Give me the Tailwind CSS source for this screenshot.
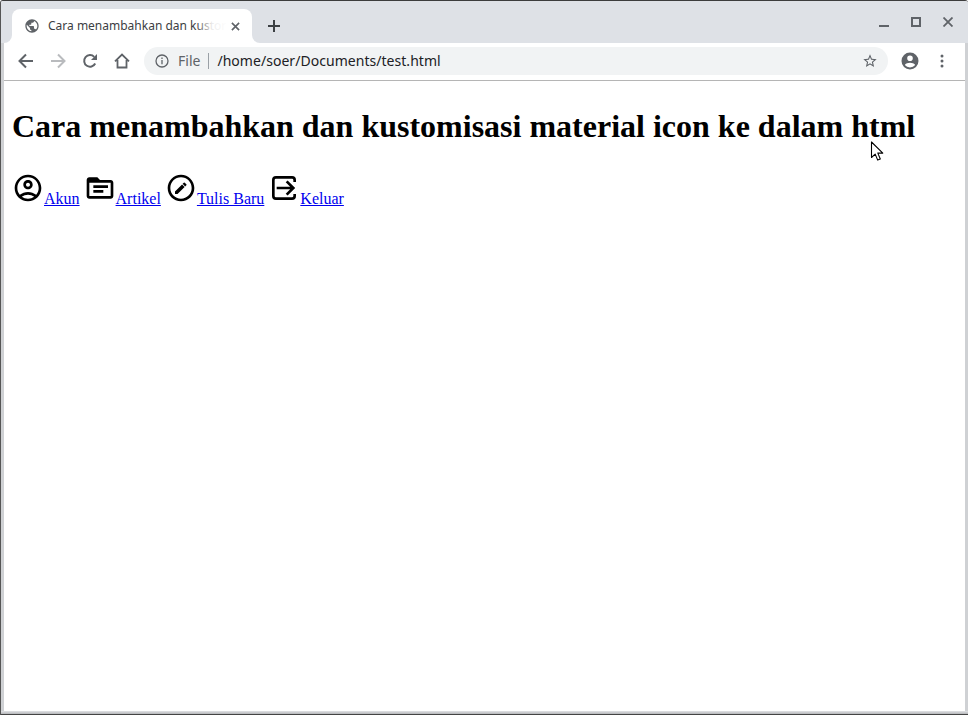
<!DOCTYPE html>
<html>
<head>
<meta charset="utf-8">
<title>Cara menambahkan dan kustomisasi material icon ke dalam html</title>
<script src="https://cdn.jsdelivr.net/npm/@tailwindcss/browser@4"></script>
</head>
<body class="bg-white overflow-hidden">
<div class="relative w-[968px] h-[715px] flex flex-col overflow-hidden bg-white border-t border-t-[#3c3c3c] border-l border-l-[#555] rounded-t-[3px]">
  <!-- tab strip -->
  <div class="h-[42px] shrink-0 bg-[#dee1e6] flex items-end pl-[11px] text-[#5f6368]">
    <div class="relative z-10 w-[240px] h-[34px] bg-white rounded-t-[8px] flex items-center pl-[12px] pr-[10px]">
      <svg class="w-[16px] h-[16px] shrink-0" viewBox="0 0 24 24" fill="#5f6368"><path d="M12 2C6.48 2 2 6.48 2 12s4.48 10 10 10 10-4.48 10-10S17.52 2 12 2zm-1 17.93c-3.95-.49-7-3.85-7-7.93 0-.62.08-1.21.21-1.79L9 15v1c0 1.1.9 2 2 2v1.93zm6.9-2.54c-.26-.81-1-1.39-1.9-1.39h-1v-3c0-.55-.45-1-1-1H8v-2h2c.55 0 1-.45 1-1V7h2c1.1 0 2-.9 2-2v-.41c2.93 1.19 5 4.06 5 7.41 0 2.08-.8 3.97-2.1 5.39z"/></svg>
      <div class="relative ml-[8px] w-[180px] shrink-0 whitespace-nowrap text-[12px] text-[#3c4043] font-['Noto_Sans',sans-serif]">Cara menambahkan dan kustor<div class="absolute inset-y-0 right-0 w-[32px] bg-gradient-to-r from-white/0 via-white/90 to-white"></div></div>
      <svg class="ml-[3px] w-[9px] h-[9px] shrink-0" viewBox="0 0 10 10" stroke="#5f6368" stroke-width="1.8" fill="none"><path d="M1 1l8 8M9 1l-8 8"/></svg>
      <div class="absolute -left-[8px] bottom-0 w-[8px] h-[8px] bg-white"><div class="w-full h-full bg-[#dee1e6] rounded-br-[8px]"></div></div>
      <div class="absolute -right-[8px] bottom-0 w-[8px] h-[8px] bg-white"><div class="w-full h-full bg-[#dee1e6] rounded-bl-[8px]"></div></div>
    </div>
    <svg class="ml-[15px] mb-[10px] w-[14px] h-[14px]" viewBox="0 0 14 14" stroke="#3c4043" stroke-width="2" fill="none"><path d="M7 1v12M1 7h12"/></svg>
    <div class="ml-auto self-start flex items-start h-[42px] pt-[16px] gap-[22px] pr-[15px]">
      <svg class="w-[10px] h-[10px]" viewBox="0 0 10 10" fill="#5f6368"><rect x="0" y="8" width="10" height="2"/></svg>
      <svg class="w-[10px] h-[10px]" viewBox="0 0 10 10" stroke="#5f6368" stroke-width="2" fill="none"><rect x="1" y="1" width="8" height="8"/></svg>
      <svg class="w-[10px] h-[10px]" viewBox="0 0 10 10" stroke="#5f6368" stroke-width="1.8" fill="none"><path d="M.5.5l9 9M9.5.5l-9 9"/></svg>
    </div>
  </div>
  <!-- toolbar -->
  <div class="h-[38px] shrink-0 bg-white border-b border-b-[#b5b5b5] flex items-center pl-[17px] pr-[14px] pb-[2px]">
    <svg class="w-[16px] h-[16px]" viewBox="0 0 16 16" fill="none" stroke="#5f6368" stroke-width="2"><path d="M15 8H2M8 1.500L1.500 8 8 14.500"/></svg>
    <svg class="ml-[16px] w-[16px] h-[16px]" viewBox="0 0 16 16" fill="none" stroke="#b9bbbe" stroke-width="2"><path d="M1 8h13M8 1.500L14.500 8 8 14.500"/></svg>
    <svg class="ml-[16px] w-[16px] h-[16px]" viewBox="0 0 16 16" fill="none"><path d="M13.200 10.500A5.800 5.800 0 1 1 12.200 3.900" stroke="#5f6368" stroke-width="2"/><path d="M15 1v6H9z" fill="#5f6368"/></svg>
    <svg class="ml-[16px] w-[16px] h-[16px]" viewBox="0 0 16 16" fill="none" stroke="#5f6368" stroke-width="1.800"><path d="M1 8.300L8 1.500l7 6.800M3.500 7v7.500h9V7"/></svg>
    <div class="ml-[14px] w-[744px] h-[28px] rounded-full bg-[#f1f3f4] flex items-center pl-[11px] pr-[10px] font-['Noto_Sans',sans-serif]">
      <svg class="w-[14px] h-[14px] shrink-0" viewBox="0 0 14 14" fill="none" stroke="#5f6368" stroke-width="1.300"><circle cx="7" cy="7" r="6"/><path d="M7 6v4.200M7 3.600v1.400"/></svg>
      <span class="ml-[9px] text-[14px] text-[#5f6368]">File</span>
      <span class="ml-[8px] w-px h-[16px] bg-[#9aa0a6]"></span>
      <span class="ml-[8px] text-[14px] tracking-[0.04px] text-[#202124]">/home/soer/Documents/test.html</span>
      <svg class="ml-auto w-[16px] h-[16px]" viewBox="0 0 24 24" fill="#5f6368"><path d="M22 9.240l-7.190-.62L12 2 9.190 8.630 2 9.240l5.460 4.730L5.820 21 12 17.270 18.180 21l-1.630-7.030L22 9.240zM12 15.400l-3.760 2.270 1-4.280-3.320-2.880 4.380-.38L12 6.100l1.710 4.040 4.380.38-3.320 2.880 1 4.280L12 15.400z"/></svg>
    </div>
    <svg class="ml-[12px] w-[20px] h-[20px]" viewBox="0 0 20 20" fill="#5f6368"><path d="M10 1.500a8.500 8.500 0 1 0 0 17 8.500 8.500 0 0 0 0-17zm0 3a2.800 2.800 0 1 1 0 5.600a2.800 2.800 0 0 1 0-5.600zm0 12a6.700 6.700 0 0 1-5.200-2.500c.6-1.500 3.500-2.300 5.200-2.300s4.600.8 5.200 2.300A6.700 6.700 0 0 1 10 16.500z"/></svg>
    <svg class="ml-[20px] w-[4px] h-[14px]" viewBox="0 0 4 14" fill="#5f6368"><circle cx="2" cy="2" r="1.500"/><circle cx="2" cy="7" r="1.500"/><circle cx="2" cy="12" r="1.500"/></svg>
  </div>
  <!-- page -->
  <div class="relative flex-1 px-[11px] font-['Liberation_Serif',serif] text-black">
    <h1 class="text-[32px] leading-[37px] font-bold pt-[27px] whitespace-nowrap">Cara menambahkan dan kustomisasi material icon ke dalam html</h1>
    <p class="mt-[27px] text-[16px] whitespace-nowrap">
      <svg class="inline-block align-baseline w-[32px] h-[32px]" viewBox="0 0 24 24" fill="#000"><path d="M12 2C6.48 2 2 6.48 2 12s4.48 10 10 10 10-4.48 10-10S17.52 2 12 2zM7.35 18.5C8.66 17.56 10.26 17 12 17s3.34.56 4.65 1.5C15.34 19.44 13.74 20 12 20s-3.34-.56-4.65-1.5zm10.790-1.380C16.450 15.800 14.320 15 12 15s-4.450.8-6.140 2.120C4.700 15.730 4 13.950 4 12c0-4.420 3.580-8 8-8s8 3.580 8 8c0 1.950-.7 3.730-1.860 5.120zM12 6c-1.930 0-3.500 1.570-3.500 3.500S10.070 13 12 13s3.500-1.570 3.500-3.500S13.930 6 12 6zm0 5c-.83 0-1.500-.67-1.500-1.500S11.170 8 12 8s1.500.67 1.500 1.500S12.830 11 12 11z"/></svg><a href="#" class="text-[#0000ee] underline">Akun</a>
      <svg class="inline-block align-baseline w-[32px] h-[32px]" viewBox="0 0 24 24" fill="#000"><path d="M20 6h-8l-2-2H4c-1.100 0-1.990.9-1.990 2L2 18c0 1.100.9 2 2 2h16c1.100 0 2-.9 2-2V8c0-1.100-.9-2-2-2zm0 12H4V8h16v10zM7 10h11v2H7zM7 13.500h7.500v2H7z"/></svg><a href="#" class="text-[#0000ee] underline">Artikel</a>
      <svg class="inline-block align-baseline w-[32px] h-[32px]" viewBox="0 0 24 24" fill="#000"><path d="M12 2C6.480 2 2 6.480 2 12s4.480 10 10 10 10-4.480 10-10S17.520 2 12 2zm0 18c-4.420 0-8-3.580-8-8s3.580-8 8-8 8 3.580 8 8-3.580 8-8 8zM7.500 14.600v1.900h1.900l5.300-5.300-1.900-1.900-5.300 5.300zm8.500-4.700a.5.5 0 0 0 0-.71l-1.190-1.190a.5.5 0 0 0-.71 0l-.9.9 1.900 1.900.9-.9z"/></svg><a href="#" class="text-[#0000ee] underline">Tulis Baru</a>
      <svg class="inline-block align-baseline w-[32px] h-[32px]" viewBox="0 0 24 24" fill="none" stroke="#000" stroke-width="2"><path d="M20 7.500V6a2 2 0 0 0-2-2H6a2 2 0 0 0-2 2v12a2 2 0 0 0 2 2h12a2 2 0 0 0 2-2v-1.500"/><path d="M6.500 12H19M14 7l5 5-5 5"/></svg><a href="#" class="text-[#0000ee] underline">Keluar</a>
    </p>
    <svg class="absolute left-[869px] top-[60px] w-[14px] h-[21px]" viewBox="0 0 14 21"><path d="M1.500 1v15.500l3.700-3.400 2.500 6 2.600-1.100-2.500-5.900h5z" fill="#fff" stroke="#000" stroke-width="1.100" stroke-linejoin="round"/></svg>
  </div>
  <!-- window frame: lies over the page edges -->
  <div class="absolute left-0 top-[42px] bottom-0 w-[3px] bg-[#cfd1d4]"></div>
  <div class="absolute right-0 top-[42px] bottom-0 w-[3px] bg-[#cfd1d4]"></div>
  <div class="absolute inset-x-0 bottom-0 h-[4px] bg-gradient-to-b from-[#e2e3e6] to-[#b5b7ba] border-b border-b-[#444]"></div>
</div>
</body>
</html>
